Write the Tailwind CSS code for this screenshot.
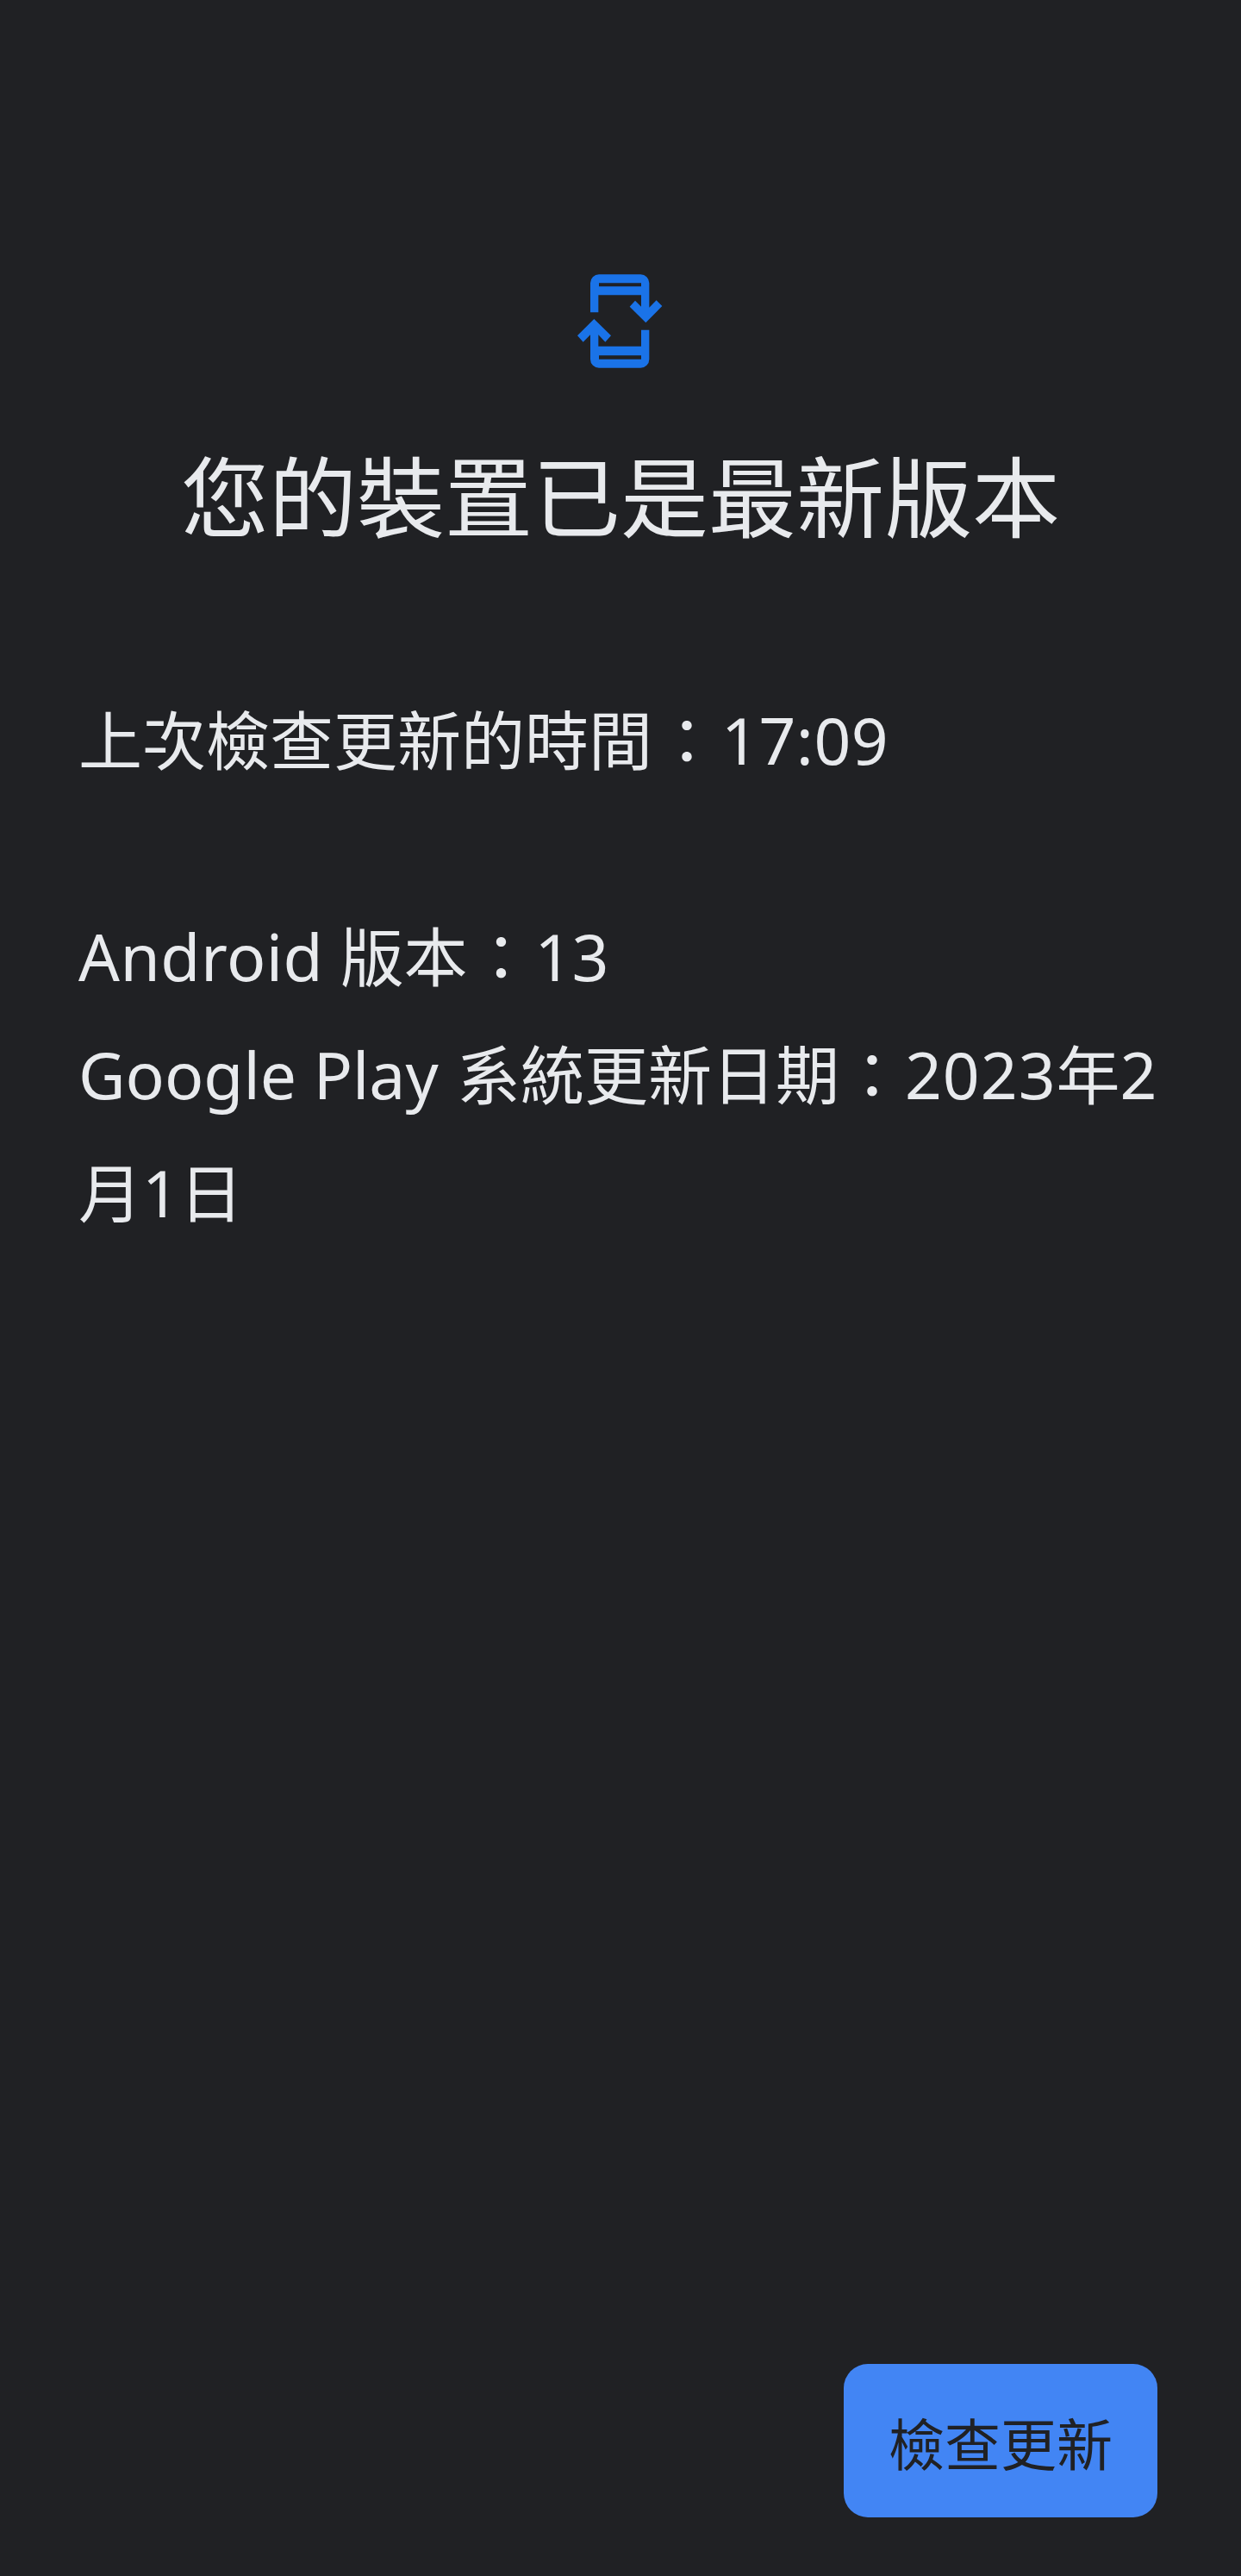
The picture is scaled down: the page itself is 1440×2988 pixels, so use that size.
<!DOCTYPE html>
<html lang="zh-Hant">
<head>
  <meta charset="UTF-8" />
  <meta name="viewport" content="width=device-width, initial-scale=1.0" />
  <title>系統更新</title>
  <script src="https://cdn.jsdelivr.net/npm/@tailwindcss/browser@4"></script>
</head>
<body class="bg-[#202124] font-['Noto_Sans','Noto_Sans_CJK_TC',sans-serif]">
  <main class="h-[2988px] w-[1440px] flex flex-col pl-[91px] pr-[91px] pt-[300px] pb-[68px] text-[#e8eaed]">
    <div class="flex justify-center">
      <svg class="w-[160px] h-[140px]" viewBox="0 0 480 420" fill="#1a73e8" fill-rule="evenodd">
        <path d="M135 187V85a30 30 0 0 1 30-30H310a30 30 0 0 1 30 30V170L365 145L385 165L328 223L272 167L291 146L312 167V127H163V187ZM165 85H312V97H165Z" />
        <path d="M340 248V350a30 30 0 0 1-30 30H165a30 30 0 0 1-30-30V265L110 290L90 268L148 210L207 268L187 290L163 265V305H312V248ZM165 337H312V350H165Z" />
      </svg>
    </div>
    <h1 class="mt-[72px] text-center text-[102px] leading-[130px] font-normal">您的裝置已是最新版本</h1>
    <p class="mt-[148px] text-[74px] leading-[137px]">上次檢查更新的時間<span class="mx-[3px]">：</span><span class="text-[75px] tracking-[0.5px]">17:09</span></p>
    <p class="mt-[114px] text-[74px] leading-[136px]"><span class="text-[75px] tracking-[0.5px]">Android</span> 版本<span class="mx-[2px]">：</span><span class="text-[75px]">13</span></p>
    <p class="text-[74px] leading-[136px] pr-[4px]"><span class="text-[75px]">Google Play</span> <span class="ml-[2px]">系統更新日期</span><span class="mx-[1px]">：</span><span class="text-[75px] tracking-[1px]">2023</span>年<span class="text-[75px]">2</span>月<span class="text-[75px]">1</span>日</p>
    <button class="mt-auto self-end mr-[6px] w-[364px] h-[178px] pt-[9px] rounded-[28px] bg-[#4285f4] text-[#202124] text-[65px]">檢查更新</button>
  </main>
</body>
</html>
